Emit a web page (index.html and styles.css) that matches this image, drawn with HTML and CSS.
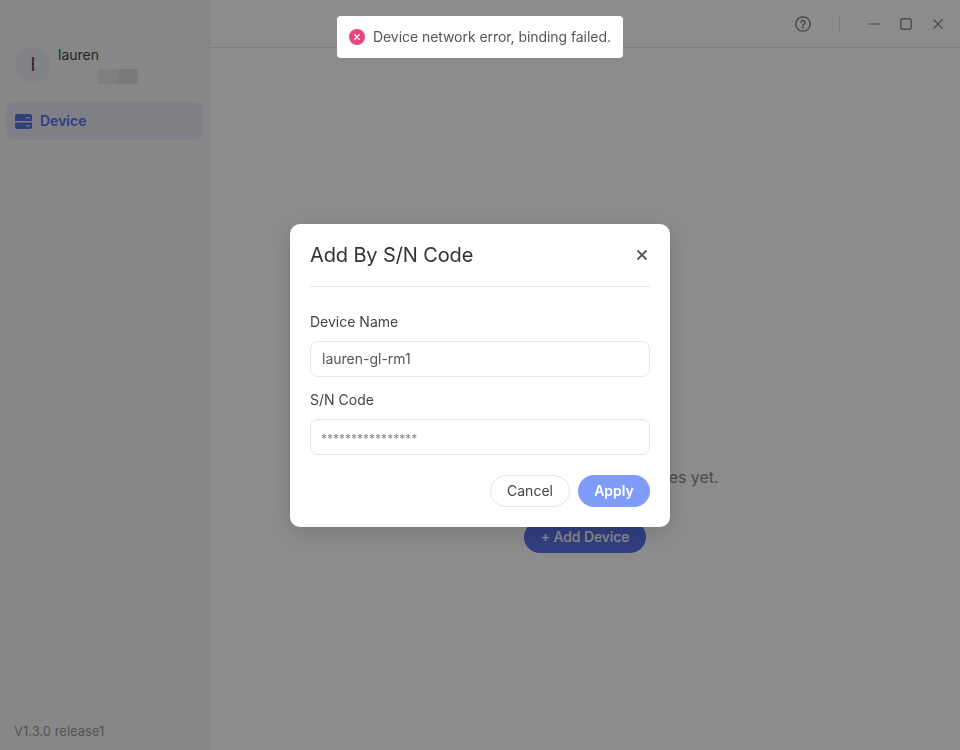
FILE: index.html
```html
<!DOCTYPE html>
<html lang="en">
<head>
    <meta charset="UTF-8">
    <title>Device</title>
    <link rel="stylesheet" href="styles.css">
</head>
<body>

<div class="app">
    <aside class="sidebar">
        <div class="user">
            <div class="avatar">l</div>
            <div class="user-info">
                <div class="user-name">lauren</div>
                <div class="user-mask"><span class="mask-a"></span><span class="mask-b"></span></div>
            </div>
        </div>
        <div class="nav-item">
            <svg class="nav-icon" width="17" height="15" viewBox="0 0 17 15">
                <path d="M2 0h13a2 2 0 0 1 2 2v5H0V2a2 2 0 0 1 2-2zM0 8.500h17V13a2 2 0 0 1-2 2H2a2 2 0 0 1-2-2z" fill="#5a72ea"/>
                <path d="M11 3h1.500v1.500H11zM13.500 3H15v1.500h-1.500zM11 11h1.500v1.500H11zM13.500 11H15v1.500h-1.500z" fill="#e6e9f5"/>
            </svg>
            <span>Device</span>
        </div>
        <div class="version">V1.3.0 release1</div>
    </aside>

    <div class="content">
        <header class="topbar">
            <svg class="top-icon" width="16" height="16" viewBox="0 0 16 16" fill="none" stroke="#6f7785" stroke-width="1.300">
                <circle cx="8" cy="8" r="7.200"/>
                <path d="M6 6.300a2 2 0 1 1 3.100 1.700c-.7.500-1.100.8-1.100 1.500" stroke-linecap="round"/>
                <circle cx="8" cy="11.600" r=".4" fill="#6f7785"/>
            </svg>
            <span class="top-sep"></span>
            <svg class="top-icon win-min" width="12" height="12" viewBox="0 0 12 12" stroke="#a8aeb8" stroke-width="1.400">
                <path d="M0 6h12"/>
            </svg>
            <svg class="top-icon win-max" width="12" height="12" viewBox="0 0 12 12" fill="none" stroke="#8a919e" stroke-width="1.500">
                <rect x=".8" y=".8" width="10.400" height="10.400" rx="2"/>
            </svg>
            <svg class="top-icon win-close" width="12" height="12" viewBox="0 0 12 12" stroke="#848b98" stroke-width="1.300">
                <path d="M1.500 1.500l9 9M10.500 1.500l-9 9"/>
            </svg>
        </header>
        <main class="empty">
            <p class="empty-text">You haven't added any devices yet.</p>
            <button class="btn-add">+ Add Device</button>
        </main>
    </div>
</div>

<div class="overlay">
    <div class="toast">
        <svg width="16" height="16" viewBox="0 0 16 16">
            <circle cx="8" cy="8" r="8" fill="#e8467c"/>
            <path d="M5.800 5.800l4.400 4.400M10.200 5.800l-4.400 4.400" stroke="#fff" stroke-width="1.300" stroke-linecap="round"/>
        </svg>
        <span>Device network error, binding failed.</span>
    </div>

    <div class="modal">
        <div class="modal-head">
            <h2>Add By S/N Code</h2>
            <svg width="12" height="12" viewBox="0 0 12 12" stroke="#555" stroke-width="1.800">
                <path d="M1.500 1.500l9 9M10.500 1.500l-9 9"/>
            </svg>
        </div>
        <label class="field-label">Device Name</label>
        <div class="field">lauren-gl-rm1</div>
        <label class="field-label">S/N Code</label>
        <div class="field field-secret">****************</div>
        <div class="modal-foot">
            <button class="btn btn-cancel">Cancel</button>
            <button class="btn btn-apply">Apply</button>
        </div>
    </div>
</div>

</body>
</html>
```

FILE: styles.css
```css
body {
    margin: 0;
    background-color: #fff;
    color: #333;
    font-family: 'Inter', sans-serif;
    font-size: 14px;
    overflow: hidden;
}
.app {
    display: flex;
    height: 750px;
}
.sidebar {
    width: 209px;
    border-right: 1px solid #e9e9e9;
    background-color: #f6f6f6;
    display: flex;
    flex-direction: column;
}
.user {
    display: flex;
    gap: 7px;
    padding: 47px 0 0 15px;
    height: 55px;
}
.avatar {
    width: 36px;
    height: 36px;
    border-radius: 50%;
    background-color: #eeeef6;
    color: #3a3a50;
    font-size: 18px;
    line-height: 36px;
    text-align: center;
}
.user-name {
    color: #444;
    line-height: 16px;
}
.user-mask {
    display: flex;
    margin: 6px 0 0 40px;
}
.user-mask span {
    width: 20px;
    height: 15px;
}
.mask-a {
    background-color: #e6e8e8;
}
.mask-b {
    background-color: #e0dcdf;
}
.nav-item {
    display: flex;
    align-items: center;
    gap: 8px;
    height: 38px;
    margin: 0 6px;
    padding-left: 9px;
    border-radius: 8px;
    background-color: #e6e9f5;
    color: #5a72ea;
    font-weight: 600;
}
.nav-item span {
    margin-top: -1px;
}
.version {
    margin-top: auto;
    padding: 0 0 11px 14px;
    color: #999;
    font-size: 13px;
    line-height: 16px;
}
.content {
    flex: 1;
    display: flex;
    flex-direction: column;
}
.topbar {
    height: 47px;
    border-bottom: 1px solid #e6e6e6;
    display: flex;
    align-items: center;
    padding-right: 16px;
}
.top-icon {
    flex: none;
}
.topbar svg:first-child {
    margin-left: auto;
}
.top-sep {
    width: 1px;
    height: 14px;
    margin: 0 28px;
    background-color: #d8d8d8;
}
.win-max {
    margin-left: 20px;
}
.win-close {
    margin-left: 20px;
}
.empty {
    flex: 1;
    display: flex;
    flex-direction: column;
    align-items: center;
    padding-top: 419px;
}
.empty-text {
    margin: 0;
    font-size: 16px;
    line-height: 20px;
    letter-spacing: -0.03px;
    color: #888;
}
.btn-add {
    margin-top: 34px;
    width: 122px;
    height: 32px;
    padding-bottom: 3px;
    border: none;
    border-radius: 16px;
    background-color: #5a72ea;
    color: #fff;
    font-family: inherit;
    font-size: 14px;
    font-weight: 500;
    letter-spacing: -0.1px;
}
.overlay {
    position: fixed;
    inset: 0;
    background-color: rgba(0,0,0,0.45);
    display: flex;
    align-items: center;
    justify-content: center;
}
.toast {
    position: absolute;
    top: 16px;
    left: 337px;
    width: 286px;
    height: 42px;
    box-sizing: border-box;
    padding-left: 12px;
    display: flex;
    align-items: center;
    gap: 8px;
    background-color: #fff;
    border-radius: 4px;
    color: #555;
    font-size: 14px;
    letter-spacing: -0.06px;
}
.toast span {
    margin-top: -1px;
}
.modal {
    width: 380px;
    height: 303px;
    box-sizing: border-box;
    padding: 0 20px;
    background-color: #fff;
    border-radius: 10px;
    box-shadow: 0 6px 24px rgba(0,0,0,0.15);
}
.modal-head {
    display: flex;
    align-items: center;
    justify-content: space-between;
    height: 62px;
    margin-bottom: 26px;
    padding-right: 2px;
    border-bottom: 1px solid #e8e8e8;
}
.modal-head h2 {
    margin: 0;
    font-size: 20px;
    font-weight: 400;
    letter-spacing: -0.13px;
    color: #333;
}
.field-label {
    display: block;
    line-height: 18px;
    color: #444;
}
.field {
    height: 34px;
    margin: 10px 0 14px;
    padding-left: 11px;
    border: 1px solid #e6e6e6;
    border-radius: 8px;
    line-height: 34px;
    color: #555;
}
.field-secret {
    margin-bottom: 0;
    padding-left: 10px;
    color: #888;
    font-size: 12px;
    line-height: 38px;
}
.modal-foot {
    display: flex;
    justify-content: flex-end;
    gap: 8px;
    margin-top: 20px;
}
.btn {
    height: 32px;
    border-radius: 16px;
    font-family: inherit;
    font-size: 14px;
}
.btn-cancel {
    width: 80px;
    background-color: #fff;
    border: 1px solid #e6e6e6;
    color: #444;
}
.btn-apply {
    width: 72px;
    background-color: #7f9cfb;
    border: none;
    color: #fff;
    font-weight: 600;
}
```
